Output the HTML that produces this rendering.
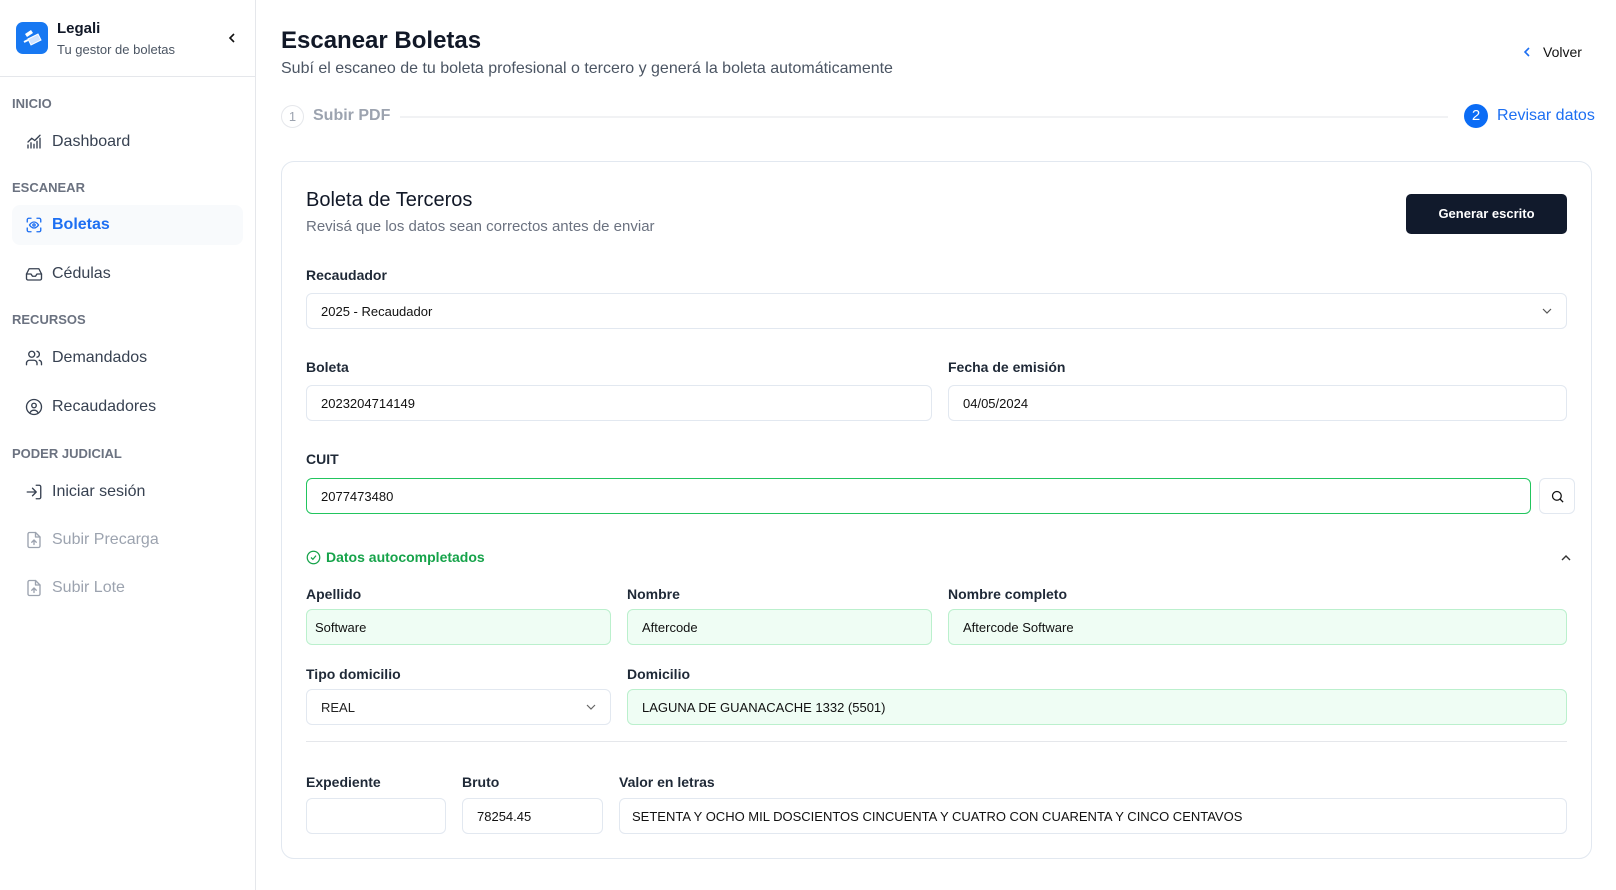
<!DOCTYPE html>
<html><head><meta charset="utf-8"><style>
*{box-sizing:border-box;margin:0;padding:0}
body{width:1616px;height:890px;overflow:hidden;background:#fff;font-family:"Liberation Sans",sans-serif;color:#111827;position:relative}
.a{position:absolute}
.side{left:0;top:0;width:256px;height:890px;border-right:1px solid #e5e7eb;background:#fff}
.sec{position:absolute;left:12px;font-size:13px;font-weight:bold;color:#6b7280}
.item{position:absolute;left:12px;width:231px;height:40px;display:flex;align-items:center;padding-left:13px;font-size:16px;color:#374151}
.item svg{width:18px;height:18px;margin-right:9px;fill:none;stroke:currentColor;stroke-width:1.8;stroke-linecap:round;stroke-linejoin:round}
.lbl{position:absolute;font-size:14px;font-weight:bold;color:#1f2937}
.inp{position:absolute;height:36px;border:1px solid #e2e8f0;border-radius:6px;background:#fff;font-size:13px;display:flex;align-items:center;padding-left:14px;color:#111}
.g{background:#effdf4;border-color:#bbf0cd}
.chev{position:absolute;right:14px;top:12px;width:10px;height:10px}
</style></head><body>
<div class="a side">
  <div class="a" style="left:16px;top:22px;width:32px;height:32px;background:#1778f2;border-radius:7px">
    <svg width="32" height="32" viewBox="0 0 32 32"><path d="M9 12l6-4 2 3-6 4z" fill="#fff"/><path d="M12 17l10-5 3 6-10 5z" fill="#cfe3ff" stroke="#fff" stroke-width="1"/><path d="M8 20l4-2" stroke="#fff" stroke-width="2"/></svg>
  </div>
  <div class="a" style="left:57px;top:20px;font-size:15px;font-weight:bold">Legali</div>
  <div class="a" style="left:57px;top:42px;font-size:13px;color:#4b5563">Tu gestor de boletas</div>
  <svg class="a" style="left:226px;top:32px" width="12" height="12" viewBox="0 0 12 12"><path d="M8 2L4 6l4 4" fill="none" stroke="#111" stroke-width="1.6"/></svg>
  <div class="a" style="left:0;top:76px;width:256px;border-top:1px solid #e5e7eb"></div>
  <div class="sec" style="top:96px">INICIO</div>
  <div class="item" style="top:122px"><svg viewBox="0 0 24 24"><path d="M4 20v-4M8 20v-7M12 20v-5M16 20v-9M20 20V7M4 12l5-5 4 3 7-7"/></svg>Dashboard</div>
  <div class="sec" style="top:180px">ESCANEAR</div>
  <div class="item" style="top:205px;background:#f8fafc;border-radius:8px;color:#1d6ff2;font-weight:bold"><svg viewBox="0 0 24 24"><path d="M3 8V5a2 2 0 0 1 2-2h3M16 3h3a2 2 0 0 1 2 2v3M21 16v3a2 2 0 0 1-2 2h-3M8 21H5a2 2 0 0 1-2-2v-3"/><path d="M6 12s2.5-4 6-4 6 4 6 4-2.5 4-6 4-6-4-6-4z"/><circle cx="12" cy="12" r="1.5"/></svg>Boletas</div>
  <div class="item" style="top:254px"><svg viewBox="0 0 24 24"><path d="M22 12h-6l-2 3h-4l-2-3H2"/><path d="M5.5 5h13L22 12v6a2 2 0 0 1-2 2H4a2 2 0 0 1-2-2v-6z"/></svg>Cédulas</div>
  <div class="sec" style="top:312px">RECURSOS</div>
  <div class="item" style="top:338px"><svg viewBox="0 0 24 24"><circle cx="9" cy="7" r="4"/><path d="M2 21v-2a4 4 0 0 1 4-4h6a4 4 0 0 1 4 4v2M16 3.1a4 4 0 0 1 0 7.8M22 21v-2a4 4 0 0 0-3-3.9"/></svg>Demandados</div>
  <div class="item" style="top:387px"><svg viewBox="0 0 24 24"><circle cx="12" cy="12" r="10"/><circle cx="12" cy="10" r="3"/><path d="M7 19a6 6 0 0 1 10 0"/></svg>Recaudadores</div>
  <div class="sec" style="top:446px">PODER JUDICIAL</div>
  <div class="item" style="top:472px"><svg viewBox="0 0 24 24"><path d="M15 3h4a2 2 0 0 1 2 2v14a2 2 0 0 1-2 2h-4M10 17l5-5-5-5M15 12H3"/></svg>Iniciar sesión</div>
  <div class="item" style="top:520px;color:#9ca3af"><svg viewBox="0 0 24 24"><path d="M14 2H6a2 2 0 0 0-2 2v16a2 2 0 0 0 2 2h12a2 2 0 0 0 2-2V8z"/><path d="M14 2v6h6M12 18v-6M9 15l3-3 3 3"/></svg>Subir Precarga</div>
  <div class="item" style="top:568px;color:#9ca3af"><svg viewBox="0 0 24 24"><path d="M14 2H6a2 2 0 0 0-2 2v16a2 2 0 0 0 2 2h12a2 2 0 0 0 2-2V8z"/><path d="M14 2v6h6M12 18v-6M9 15l3-3 3 3"/></svg>Subir Lote</div>
</div>

<div class="a" style="left:281px;top:27px;font-size:24px;font-weight:bold;color:#111827">Escanear Boletas</div>
<div class="a" style="left:281px;top:60px;font-size:16px;color:#4b5563">Subí el escaneo de tu boleta profesional o tercero y generá la boleta automáticamente</div>
<svg class="a" style="left:1521px;top:46px" width="12" height="12" viewBox="0 0 12 12"><path d="M8 2L4 6l4 4" fill="none" stroke="#1d6ff2" stroke-width="1.6"/></svg>
<div class="a" style="left:1543px;top:44px;font-size:14px;color:#111">Volver</div>

<div class="a" style="left:281px;top:105px;width:23px;height:23px;border:1px solid #e5e7eb;border-radius:50%;font-size:13px;color:#9ca3af;text-align:center;line-height:21px">1</div>
<div class="a" style="left:313px;top:107px;font-size:16px;font-weight:bold;color:#9ca3af">Subir PDF</div>
<div class="a" style="left:400px;top:116px;width:1048px;border-top:2px solid #f1f2f4"></div>
<div class="a" style="left:1464px;top:104px;width:24px;height:24px;background:#0b6cf5;border-radius:50%;font-size:15px;color:#fff;text-align:center;line-height:24px">2</div>
<div class="a" style="left:1497px;top:107px;font-size:16px;color:#1d6ff2">Revisar datos</div>

<div class="a" style="left:281px;top:161px;width:1311px;height:698px;border:1px solid #e2e8f0;border-radius:13px"></div>
<div class="a" style="left:306px;top:189px;font-size:20px;color:#111827">Boleta de Terceros</div>
<div class="a" style="left:306px;top:218px;font-size:15px;color:#6b7280">Revisá que los datos sean correctos antes de enviar</div>
<div class="a" style="left:1406px;top:194px;width:161px;height:40px;background:#111a2c;border-radius:5px;color:#fff;font-size:13px;font-weight:bold;text-align:center;line-height:40px">Generar escrito</div>

<div class="lbl" style="left:306px;top:267px">Recaudador</div>
<div class="inp" style="left:306px;top:293px;width:1261px">2025 - Recaudador<svg class="chev" viewBox="0 0 10 10"><path d="M1 3l4 4 4-4" fill="none" stroke="#555" stroke-width="1.2"/></svg></div>

<div class="lbl" style="left:306px;top:359px">Boleta</div>
<div class="inp" style="left:306px;top:385px;width:626px">2023204714149</div>
<div class="lbl" style="left:948px;top:359px">Fecha de emisión</div>
<div class="inp" style="left:948px;top:385px;width:619px">04/05/2024</div>

<div class="lbl" style="left:306px;top:451px">CUIT</div>
<div class="inp" style="left:306px;top:478px;width:1225px;border-color:#22c55e">2077473480</div>
<div class="inp" style="left:1539px;top:478px;width:36px;padding:0;justify-content:center"><svg width="15" height="15" viewBox="0 0 24 24" fill="none" stroke="#111" stroke-width="2"><circle cx="11" cy="11" r="7"/><path d="M21 21l-5-5"/></svg></div>

<svg class="a" style="left:306px;top:550px" width="15" height="15" viewBox="0 0 24 24" fill="none" stroke="#16a34a" stroke-width="2"><circle cx="12" cy="12" r="10"/><path d="M8 12l3 3 5-6"/></svg>
<div class="a" style="left:326px;top:549px;font-size:14px;font-weight:bold;color:#16a34a">Datos autocompletados</div>
<svg class="a" style="left:1560px;top:552px" width="12" height="12" viewBox="0 0 12 12"><path d="M2 8l4-4 4 4" fill="none" stroke="#333" stroke-width="1.4"/></svg>

<div class="lbl" style="left:306px;top:586px">Apellido</div>
<div class="inp g" style="left:306px;top:609px;width:305px;padding-left:8px">Software</div>
<div class="lbl" style="left:627px;top:586px">Nombre</div>
<div class="inp g" style="left:627px;top:609px;width:305px">Aftercode</div>
<div class="lbl" style="left:948px;top:586px">Nombre completo</div>
<div class="inp g" style="left:948px;top:609px;width:619px">Aftercode Software</div>

<div class="lbl" style="left:306px;top:666px">Tipo domicilio</div>
<div class="inp" style="left:306px;top:689px;width:305px;color:#222">REAL<svg class="chev" viewBox="0 0 10 10"><path d="M1 3l4 4 4-4" fill="none" stroke="#666" stroke-width="1.2"/></svg></div>
<div class="lbl" style="left:627px;top:666px">Domicilio</div>
<div class="inp g" style="left:627px;top:689px;width:940px">LAGUNA DE GUANACACHE 1332 (5501)</div>

<div class="a" style="left:306px;top:741px;width:1261px;border-top:1px solid #e5e7eb"></div>

<div class="lbl" style="left:306px;top:774px">Expediente</div>
<div class="inp" style="left:306px;top:798px;width:140px"></div>
<div class="lbl" style="left:462px;top:774px">Bruto</div>
<div class="inp" style="left:462px;top:798px;width:141px">78254.45</div>
<div class="lbl" style="left:619px;top:774px">Valor en letras</div>
<div class="inp" style="left:619px;top:798px;width:948px;padding-left:12px">SETENTA Y OCHO MIL DOSCIENTOS CINCUENTA Y CUATRO CON CUARENTA Y CINCO CENTAVOS</div>
</body></html>
